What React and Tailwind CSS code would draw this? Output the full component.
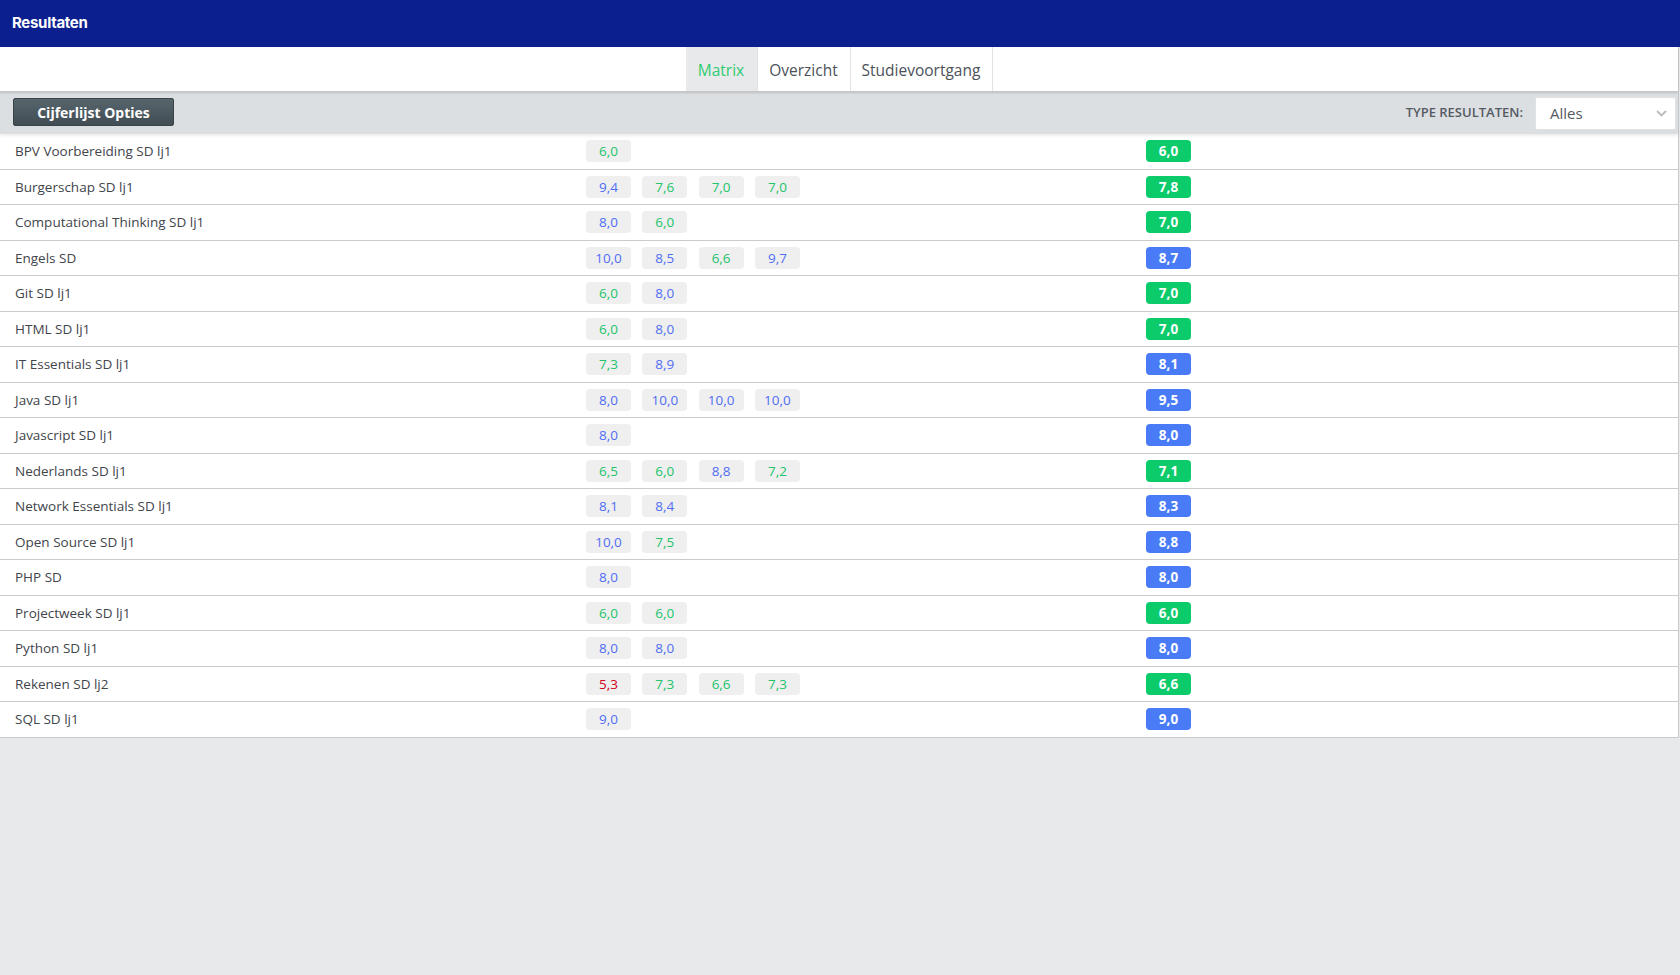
import React from "react";

const rows = [
  ["BPV Voorbereiding SD lj1", ["6,0"], "6,0"],
  ["Burgerschap SD lj1", ["9,4", "7,6", "7,0", "7,0"], "7,8"],
  ["Computational Thinking SD lj1", ["8,0", "6,0"], "7,0"],
  ["Engels SD", ["10,0", "8,5", "6,6", "9,7"], "8,7"],
  ["Git SD lj1", ["6,0", "8,0"], "7,0"],
  ["HTML SD lj1", ["6,0", "8,0"], "7,0"],
  ["IT Essentials SD lj1", ["7,3", "8,9"], "8,1"],
  ["Java SD lj1", ["8,0", "10,0", "10,0", "10,0"], "9,5"],
  ["Javascript SD lj1", ["8,0"], "8,0"],
  ["Nederlands SD lj1", ["6,5", "6,0", "8,8", "7,2"], "7,1"],
  ["Network Essentials SD lj1", ["8,1", "8,4"], "8,3"],
  ["Open Source SD lj1", ["10,0", "7,5"], "8,8"],
  ["PHP SD", ["8,0"], "8,0"],
  ["Projectweek SD lj1", ["6,0", "6,0"], "6,0"],
  ["Python SD lj1", ["8,0", "8,0"], "8,0"],
  ["Rekenen SD lj2", ["5,3", "7,3", "6,6", "7,3"], "6,6"],
  ["SQL SD lj1", ["9,0"], "9,0"],
];

const val = (s) => parseFloat(s.replace(",", "."));

function chipText(s) {
  const v = val(s);
  if (v < 5.5) return "text-[#d0021b]";
  if (v < 8) return "text-[#21c46b]";
  return "text-[#4f6ef5]";
}

function finalBg(s) {
  const v = val(s);
  if (v < 5.5) return "bg-[#e0242f]";
  if (v < 8) return "bg-[#0ccb6b]";
  return "bg-[#4a7bf7]";
}

export default function App() {
  return (
    <div
      className="w-[1680px] h-[975px] bg-[#e8e9eb] flex flex-col overflow-hidden"
      style={{ fontFamily: '"Open Sans", "Noto Sans", sans-serif' }}
    >
      <div className="h-[47px] bg-[#0b1f8f] flex items-center pl-[12px] shrink-0">
        <span
          className="text-white text-[15px] font-bold tracking-[-0.3px]"
          style={{ fontFamily: 'Inter, "Noto Sans", sans-serif' }}
        >
          Resultaten
        </span>
      </div>
      <div className="border-r border-[#c8cacc] mr-[1px] bg-white flex flex-col shrink-0">
        <div className="h-[45px] bg-white flex justify-center border-b border-[#c4c6c8] shadow-[0_1px_2px_rgba(0,0,0,0.15)] relative z-10">
          <div className="flex">
            <div className="w-[72px] pt-[3px] bg-[#e8e9eb] flex items-center justify-center text-[15.5px] font-medium text-[#2ecc71] border-r border-[#e2e2e2]">
              Matrix
            </div>
            <div className="w-[93px] pt-[3px] flex items-center justify-center text-[15.5px] font-medium text-[#4c5259] border-r border-[#e2e2e2]">
              Overzicht
            </div>
            <div className="w-[142px] pt-[3px] flex items-center justify-center text-[15.5px] font-medium text-[#4c5259] border-r border-[#e2e2e2]">
              Studievoortgang
            </div>
          </div>
        </div>
        <div className="h-[42px] bg-[#dcdfe2] flex items-center justify-between pl-[13px] pr-[2px] shadow-[0_2px_3px_rgba(0,0,0,0.08)] relative z-[5]">
          <button className="h-[28px] w-[161px] rounded-[2px] border border-[#3a4448] bg-gradient-to-b from-[#57656d] to-[#414d53] text-white text-[14px] font-bold mt-[-2px]">
            Cijferlijst Opties
          </button>
          <div className="flex items-center gap-[12px]">
            <span className="text-[13px] text-[#555b62] font-semibold">
              TYPE RESULTATEN:
            </span>
            <div className="w-[141px] h-[33px] bg-white border border-[#e0e2e4] rounded-[2px] flex items-center justify-between pl-[14px] pr-[8px]">
              <span className="text-[15px] text-[#555b62]">Alles</span>
              <svg width="11" height="7" viewBox="0 0 11 7">
                <path d="M1 1l4.5 4.5L10 1" fill="none" stroke="#bbb" strokeWidth="1.8" />
              </svg>
            </div>
          </div>
        </div>
        <div className="flex flex-col">
          {rows.map(([name, grades, final]) => (
            <div
              key={name}
              className="h-[35.5px] border-b border-[#c9cbcd] flex items-center"
            >
              <div className="w-[586px] pl-[15px] text-[13.5px] font-medium text-[#3f454b]">
                {name}
              </div>
              <div className="w-[560px] flex gap-[11.3px]">
                {grades.map((g, i) => (
                  <div
                    key={i}
                    className={`w-[45px] h-[22px] rounded-[4px] bg-[#efefef] flex items-center justify-center text-[13.5px] ${chipText(g)}`}
                  >
                    {g}
                  </div>
                ))}
              </div>
              <div
                className={`w-[45px] h-[22px] rounded-[4px] flex items-center justify-center text-[13.5px] font-bold text-white ${finalBg(final)}`}
              >
                {final}
              </div>
            </div>
          ))}
        </div>
      </div>
    </div>
  );
}
